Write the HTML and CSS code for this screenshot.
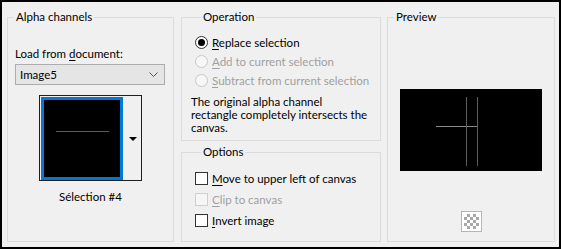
FILE: index.html
```html
<!DOCTYPE html>
<html lang="en">
<head>
    <meta charset="UTF-8">
    <title>Load Selection From Alpha Channel</title>
    <link rel="stylesheet" href="styles.css">
</head>
<body>
    <div class="dialog">
        <!-- Alpha channels -->
        <fieldset class="group col-alpha">
            <legend>Alpha channels</legend>
            <div class="alpha-body">
                <div class="field-label">Load from <u>d</u>ocument:</div>
                <div class="select">
                    <span>Image5</span>
                    <svg class="chevron" width="9" height="5" viewBox="0 0 9 5">
                        <path d="M0.5 0.5 L4.5 4.5 L8.5 0.5" fill="none" stroke="#555" stroke-width="1"/>
                    </svg>
                </div>
                <div class="thumb-picker">
                    <div class="thumb">
                        <div class="thumb-line"></div>
                    </div>
                    <div class="thumb-drop">
                        <span class="tri"></span>
                    </div>
                </div>
                <div class="thumb-caption">Sélection #4</div>
            </div>
        </fieldset>

        <!-- Operation / Options -->
        <div class="col-middle">
            <fieldset class="group operation">
                <legend>Operation</legend>
                <div class="radio-row">
                    <span class="radio checked"></span>
                    <span><u>R</u>eplace selection</span>
                </div>
                <div class="radio-row disabled">
                    <span class="radio"></span>
                    <span><u>A</u>dd to current selection</span>
                </div>
                <div class="radio-row disabled">
                    <span class="radio"></span>
                    <span><u>S</u>ubtract from current selection</span>
                </div>
                <p class="note">The original alpha channel<br>rectangle completely intersects the<br>canvas.</p>
            </fieldset>

            <fieldset class="group options">
                <legend>Options</legend>
                <div class="check-row">
                    <span class="check"></span>
                    <span><u>M</u>ove to upper left of canvas</span>
                </div>
                <div class="check-row disabled">
                    <span class="check"></span>
                    <span><u>C</u>lip to canvas</span>
                </div>
                <div class="check-row">
                    <span class="check"></span>
                    <span><u>I</u>nvert image</span>
                </div>
            </fieldset>
        </div>

        <!-- Preview -->
        <fieldset class="group col-preview">
            <legend>Preview</legend>
            <div class="preview-body">
                <div class="preview">
                    <svg width="142" height="82" viewBox="0 0 142 82">
                        <line x1="36" y1="37.5" x2="78" y2="37.5" stroke="#8a8a8a" stroke-width="1"/>
                        <line x1="66.5" y1="8" x2="66.5" y2="77" stroke="#5e5e5e" stroke-width="1"/>
                        <line x1="77.5" y1="8" x2="77.5" y2="77" stroke="#5e5e5e" stroke-width="1"/>
                    </svg>
                </div>
                <div class="checker-btn">
                    <div class="checker"></div>
                </div>
            </div>
        </fieldset>
    </div>
</body>
</html>
```

FILE: styles.css
```css
* {
    margin: 0;
    padding: 0;
    box-sizing: border-box;
}

body {
    font-family: Lato, 'Liberation Sans', sans-serif;
    font-size: 11.5px;
    color: #000;
    background: #f0f0f0;
}

u {
    text-underline-offset: 2px;
}

.dialog {
    width: 561px;
    height: 249px;
    border: 2px solid #000;
    background: #f0f0f0;
    padding: 7px 4px 5px 5px;
    display: flex;
    gap: 7px;
    white-space: nowrap;
}

/* group boxes */
.group {
    border: 1px solid #dcdcdc;
    min-width: 0;
}

.group legend {
    margin-left: 6px;
    padding: 0 2px;
    line-height: 16px;
}

.col-alpha {
    width: 167px;
}

.col-middle {
    width: 200px;
    display: flex;
    flex-direction: column;
    gap: 3px;
}

.col-preview {
    width: 168px;
    margin-left: -1px;
}

/* alpha channels */
.alpha-body {
    padding: 21px 7px 0 7px;
    display: flex;
    flex-direction: column;
}

.field-label {
    line-height: 16px;
}

.select {
    margin-top: 2px;
    height: 21px;
    width: 150px;
    background: #e5e5e5;
    border: 1px solid #adadad;
    display: flex;
    align-items: center;
    justify-content: space-between;
    padding: 0 6px 0 4px;
}

.chevron {
    display: block;
}

.thumb-picker {
    margin: 10px auto 0;
    width: 103px;
    height: 86px;
    border: 1px solid #1e1e1e;
    padding: 1px 0 0 1px;
    display: flex;
}

.thumb {
    width: 82px;
    height: 83px;
    background: #000;
    border: 3px solid #0078d7;
    display: flex;
    align-items: center;
    justify-content: center;
    padding-bottom: 15px;
}

.thumb-line {
    width: 53px;
    height: 1px;
    background: #5a5a5a;
}

.thumb-drop {
    flex: 1;
    display: flex;
    align-items: center;
    justify-content: center;
    padding-left: 1px;
}

.tri {
    width: 0;
    height: 0;
    border-left: 4px solid transparent;
    border-right: 4px solid transparent;
    border-top: 4px solid #000;
}

.thumb-caption {
    margin-top: 8px;
    line-height: 16px;
    text-align: center;
}

/* operation */
.operation {
    padding: 8px 0 6px 13px;
}

.radio-row,
.check-row {
    display: flex;
    align-items: center;
    gap: 4px;
}

.radio-row {
    height: 19px;
}

.check-row {
    height: 21px;
}

.disabled {
    color: #a0a0a0;
}

.radio {
    flex: none;
    width: 13px;
    height: 13px;
    border-radius: 50%;
    border: 1px solid #333;
    background: #fff;
    display: grid;
    place-items: center;
}

.radio.checked::after {
    content: "";
    width: 7px;
    height: 7px;
    border-radius: 50%;
    background: #000;
}

.disabled .radio {
    border-color: #c8c8c8;
    background: #f7f7f7;
}

.note {
    margin: 5px 0 0 -4px;
    line-height: 13px;
}

/* options */
.options {
    flex: 1;
    padding: 8px 0 0 13px;
}

.check {
    flex: none;
    width: 13px;
    height: 13px;
    border: 1px solid #333;
    background: #fff;
}

.disabled .check {
    border-color: #cfcfcf;
    background: #f6f6f6;
}

/* preview */
.preview-body {
    display: flex;
    flex-direction: column;
    align-items: center;
    padding-top: 64px;
}

.preview {
    width: 142px;
    height: 82px;
    background: #000;
}

.preview svg {
    display: block;
}

.checker-btn {
    margin-top: 40px;
    width: 21px;
    height: 21px;
    border: 1px solid #b5b5b5;
    padding: 2px;
    background: #fff;
}

.checker {
    width: 100%;
    height: 100%;
    background: repeating-conic-gradient(#a8a8a8 0 25%, #fff 0 50%) 0 0 / 6px 6px;
}
```
